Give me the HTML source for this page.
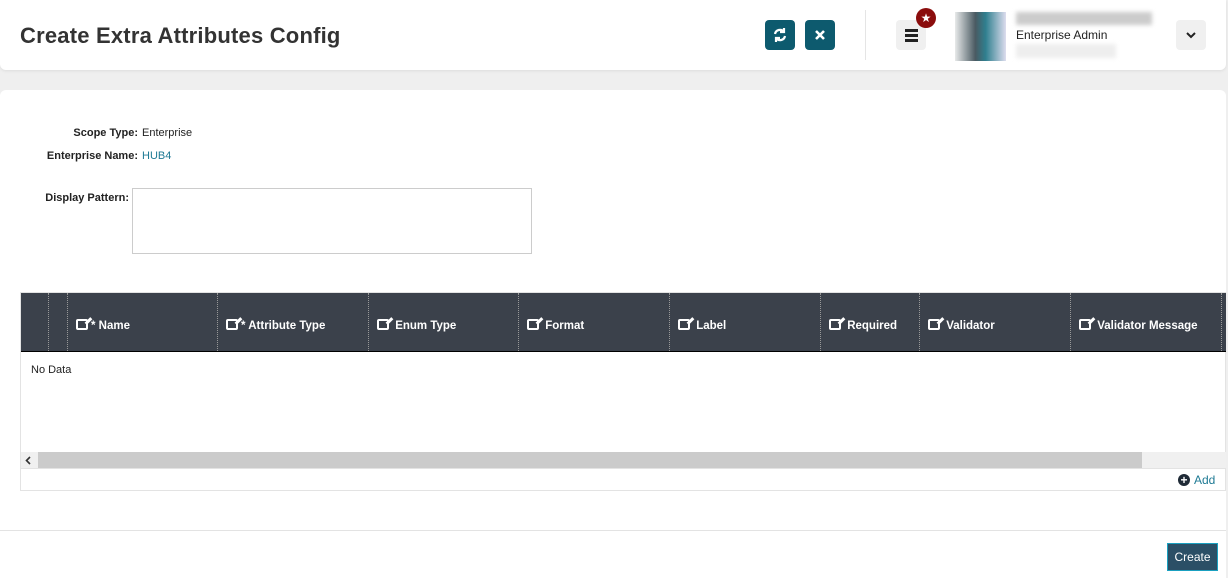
<!DOCTYPE html>
<html><head><style>
*{box-sizing:border-box;margin:0;padding:0}
body{width:1228px;height:578px;background:#efefef;font-family:"Liberation Sans",sans-serif;position:relative;overflow:hidden;font-size:11px;color:#222}
.abs{position:absolute}
.hdr{left:0;top:0;width:1226px;height:70px;background:#fff;border-radius:0 0 6px 6px;box-shadow:0 1px 3px rgba(0,0,0,.08)}
.card{left:0;top:90px;width:1226px;height:488px;background:#fff;border-radius:6px 6px 0 0}
.btn{width:30px;height:30px;border-radius:4px;background:#0d5a6e;color:#fff;display:flex;align-items:center;justify-content:center}
.lbl{font-weight:bold;text-align:right;width:118px}
.th{top:293px;height:58px;background:#3b414b}
.col{top:293px;height:58px;border-left:1px dotted #999;color:#fff;font-weight:bold;font-size:11.5px;padding:26px 0 0 8px;white-space:nowrap}
.ic{display:inline-block;width:12px;height:11px;border:2px solid #fff;border-radius:2px;margin-right:3px;vertical-align:-1px;position:relative}
.ic:after{content:"";position:absolute;right:-4px;top:-4px;width:3px;height:8px;background:#fff;transform:rotate(45deg)}
</style></head><body>
<div class="abs hdr"></div>
<div class="abs" style="left:20px;top:23px;font-size:22px;font-weight:bold;color:#333;letter-spacing:0.2px">Create Extra Attributes Config</div>
<div class="abs btn" style="left:765px;top:20px"><svg width="16" height="16" viewBox="0 0 16 16" fill="none" stroke="#fff" stroke-width="2.2"><path d="M3 7a5 5 0 0 1 9-2M13 9a5 5 0 0 1-9 2"/><path d="M12 1v4H8M4 15v-4h4" fill="none"/></svg></div>
<div class="abs btn" style="left:805px;top:20px"><svg width="12" height="12" viewBox="0 0 12 12" stroke="#fff" stroke-width="2.6"><path d="M2 2l8 8M10 2l-8 8"/></svg></div>
<div class="abs" style="left:865px;top:10px;width:1px;height:50px;background:#e5e5e5"></div>
<div class="abs" style="left:896px;top:20px;width:30px;height:30px;border-radius:4px;background:#f0f0f0"><div style="position:absolute;left:9px;top:9px;width:13px;height:3px;background:#222;box-shadow:0 5px 0 #222,0 10px 0 #222"></div></div>
<div class="abs" style="left:916px;top:8px;width:20px;height:20px;border-radius:50%;background:#8b0d0d;color:#fff;font-size:12px;text-align:center;line-height:20px">★</div>
<div class="abs" style="left:955px;top:12px;width:51px;height:49px;background:linear-gradient(90deg,#e8eaea,#4a5a62 40%,#2f7f8f 60%,#dde)"></div>
<div class="abs" style="left:1016px;top:12px;width:136px;height:13px;background:#ccc;filter:blur(2px)"></div>
<div class="abs" style="left:1016px;top:28px;font-size:12px;color:#222">Enterprise Admin</div>
<div class="abs" style="left:1016px;top:44px;width:100px;height:14px;background:#eee;filter:blur(2px)"></div>
<div class="abs" style="left:1176px;top:20px;width:30px;height:30px;border-radius:4px;background:#f0f0f0;display:flex;align-items:center;justify-content:center"><svg width="10" height="7" viewBox="0 0 10 7" fill="none" stroke="#222" stroke-width="2"><path d="M1 1l4 4 4-4"/></svg></div>

<div class="abs card"></div>
<div class="abs lbl" style="left:20px;top:127px">Scope Type: <span style="font-weight:normal;position:absolute;left:122px">Enterprise</span></div>
<div class="abs lbl" style="left:20px;top:150px">Enterprise Name: <span style="font-weight:normal;position:absolute;left:122px;color:#1e7a94">HUB4</span></div>
<div class="abs lbl" style="left:11px;top:192px">Display Pattern:</div>
<div class="abs" style="left:132px;top:188px;width:400px;height:66px;border:1px solid #ccc"></div>

<div class="abs" style="left:20px;top:292px;width:1206px;height:199px;border:1px solid #e3e3e3"></div>
<div class="abs th" style="left:21px;width:1205px"></div>
<div class="abs" style="left:21px;top:351px;width:1205px;height:1px;background:#000"></div>
<div class="abs col" style="left:48px;width:19px"></div>
<div class="abs col" style="left:67px;width:150px"><span class="ic"></span>* Name</div>
<div class="abs col" style="left:217px;width:151px"><span class="ic"></span>* Attribute Type</div>
<div class="abs col" style="left:368px;width:150px"><span class="ic"></span> Enum Type</div>
<div class="abs col" style="left:518px;width:151px"><span class="ic"></span> Format</div>
<div class="abs col" style="left:669px;width:151px"><span class="ic"></span> Label</div>
<div class="abs col" style="left:820px;width:99px"><span class="ic"></span> Required</div>
<div class="abs col" style="left:919px;width:151px"><span class="ic"></span> Validator</div>
<div class="abs col" style="left:1070px;width:151px"><span class="ic"></span> Validator Message</div>
<div class="abs col" style="left:1221px;width:5px;padding:0"></div>
<div class="abs" style="left:31px;top:364px">No Data</div>
<div class="abs" style="left:21px;top:452px;width:1205px;height:16px;background:#f0f0f0"></div>
<div class="abs" style="left:38px;top:452px;width:1104px;height:16px;background:#cbcbcb"></div>
<div class="abs" style="left:25px;top:456px"><svg width="6" height="9" viewBox="0 0 6 9" fill="none" stroke="#333" stroke-width="1.6"><path d="M5 1L1.5 4.5 5 8"/></svg></div>
<div class="abs" style="left:21px;top:468px;width:1205px;height:1px;background:#e3e3e3"></div>
<div class="abs" style="left:1178px;top:474px;width:12px;height:12px;border-radius:50%;background:#1f2a36;color:#fff;font-size:12px;line-height:12px;text-align:center;font-weight:bold">+</div>
<div class="abs" style="left:1194px;top:473px;color:#1e7a94;font-size:12px">Add</div>
<div class="abs" style="left:0;top:530px;width:1226px;height:1px;background:#e3e3e3"></div>
<div class="abs" style="left:1167px;top:543px;width:51px;height:28px;background:#2b4f66;border:1px solid #1aa0c0;color:#fff;font-size:12px;text-align:center;line-height:26px">Create</div>
</body></html>
